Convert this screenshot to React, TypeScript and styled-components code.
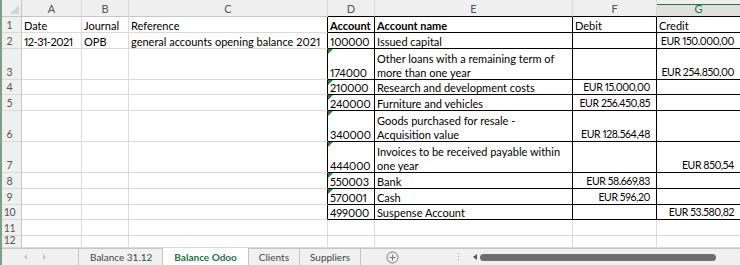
import React from "react";
import styled, { createGlobalStyle, css } from "styled-components";

const GlobalStyle = createGlobalStyle`
  html, body {
    margin: 0;
    padding: 0;
    background: #ffffff;
  }
  body {
    font-family: Lato, "Liberation Sans", sans-serif;
    overflow: hidden;
  }
`;

const GREEN = "#217346";
const GRID = "#dadada";
const HEAD_LINE = "#c6c6c6";

type Row = {
  h: number;
  a?: string;
  b?: string;
  c?: string;
  d?: string;
  e?: string[];
  f?: string;
  g?: string;
  flag?: boolean;
  head?: boolean;
};

const rows: Row[] = [
  { h: 16, a: "Date", b: "Journal", c: "Reference", d: "Account", e: ["Account name"], f: "Debit", g: "Credit", head: true },
  { h: 16, a: "12-31-2021", b: "OPB", c: "general accounts opening balance 2021", d: "100000", e: ["Issued capital"], g: "EUR 150.000,00" },
  { h: 31, d: "174000", e: ["Other loans with a remaining term of", "more than one year"], g: "EUR 254.850,00", flag: true },
  { h: 15, d: "210000", e: ["Research and development costs"], f: "EUR 15.000,00", flag: true },
  { h: 16, d: "240000", e: ["Furniture and vehicles"], f: "EUR 256.450,85", flag: true },
  { h: 31, d: "340000", e: ["Goods purchased for resale -", "Acquisition value"], f: "EUR 128.564,48", flag: true },
  { h: 31, d: "444000", e: ["Invoices to be received payable within", "one year"], g: "EUR 850,54", flag: true },
  { h: 16, d: "550003", e: ["Bank"], f: "EUR 58.669,83", flag: true },
  { h: 16, d: "570001", e: ["Cash"], f: "EUR 596,20", flag: true },
  { h: 15, d: "499000", e: ["Suspense Account"], g: "EUR 53.580,82" },
  { h: 16 },
  { h: 12 },
];

const columns = ["A", "B", "C", "D", "E", "F", "G"];
const TABLE_ROWS = 10;

// Lato's figures run wider than the sheet's font, so figures get narrowed a bit
type Fit = { size: number; spacing: number };
const fitFor = (text: string): Fit => {
  if (/[a-z]/.test(text)) return { size: 11, spacing: 0 };
  if (text.startsWith("EUR")) return { size: 10.5, spacing: -0.4 };
  if (text.includes("-")) return { size: 11, spacing: -0.5 };
  if (/^\d+$/.test(text)) return { size: 11, spacing: -0.2 };
  return { size: 11, spacing: 0 };
};

const Frame = styled.div`
  width: 740px;
  height: 265px;
  box-sizing: border-box;
  border-left: 2px solid #7f9d88;
  display: flex;
  flex-direction: column;
  overflow: hidden;
`;

const Sheet = styled.div<{ $rows: string }>`
  display: grid;
  grid-template-columns: 20px 60px 47px 199px 47px 198px 84px 84px;
  grid-template-rows: 17px ${(p) => p.$rows};
  font-size: 11px;
  color: #000;
  flex: none;
`;

const Corner = styled.div`
  position: relative;
  background: #efefef;
  border-right: 1px solid ${HEAD_LINE};
  border-bottom: 1px solid ${HEAD_LINE};
  &::after {
    content: "";
    position: absolute;
    right: 2px;
    bottom: 2px;
    border-left: 9px solid transparent;
    border-bottom: 9px solid #d4d4d4;
  }
`;

const ColHead = styled.div<{ $active?: boolean; $boxed?: boolean }>`
  display: flex;
  align-items: flex-end;
  justify-content: center;
  background: #efefef;
  color: #555;
  border-right: 1px solid ${GRID};
  border-bottom: 1px solid ${(p) => (p.$boxed ? "#000" : HEAD_LINE)};
  line-height: 14px;
  ${(p) =>
    p.$active &&
    css`
      background: #e0e0e0;
      color: ${GREEN};
      box-shadow: inset 0 4px 0 #efefef, inset 0 5px 0 ${GREEN};
    `}
`;

const RowHead = styled.div`
  display: flex;
  align-items: flex-end;
  justify-content: center;
  padding-right: 4px;
  background: #efefef;
  color: #555;
  font-size: 10.5px;
  letter-spacing: -0.3px;
  border-right: 1px solid ${HEAD_LINE};
  border-bottom: 1px solid ${GRID};
  line-height: 14px;
  overflow: hidden;
`;

const Cell = styled.div<{ $boxed?: boolean; $edge?: boolean; $num?: boolean; $bold?: boolean; $flag?: boolean }>`
  position: relative;
  display: flex;
  flex-direction: column;
  justify-content: flex-end;
  align-items: ${(p) => (p.$num ? "flex-end" : "flex-start")};
  padding: 0 ${(p) => (p.$num ? "6px" : "2px")} 0 2px;
  border-right: 1px solid ${(p) => (p.$boxed || p.$edge ? "#000" : GRID)};
  border-bottom: 1px solid ${(p) => (p.$boxed ? "#000" : GRID)};
  font-weight: ${(p) => (p.$bold ? 700 : 400)};
  white-space: nowrap;
  ${(p) =>
    p.$flag &&
    css`
      &::before {
        content: "";
        position: absolute;
        top: 0;
        left: 0;
        border-top: 5px solid #1d8a2e;
        border-right: 5px solid transparent;
      }
    `}
`;

const Line = styled.span<{ $fit: Fit }>`
  display: block;
  line-height: 15px;
  margin-bottom: -1px;
  font-size: ${(p) => p.$fit.size}px;
  letter-spacing: ${(p) => p.$fit.spacing}px;
  font-variant-numeric: proportional-nums;
`;

const TabBar = styled.div`
  display: flex;
  height: 17px;
  flex: none;
  background: #f0f0f0;
  box-shadow: inset 0 1px 0 ${HEAD_LINE};
  font-size: 10px;
  color: #444;
`;

const NavArea = styled.div`
  width: 77px;
  display: flex;
  align-items: center;
  gap: 16px;
  padding-left: 22px;
  box-sizing: border-box;
  border-right: 1px solid ${HEAD_LINE};
  margin-right: 1px;
`;

const NavArrow = styled.span<{ $dir: "left" | "right" }>`
  width: 0;
  height: 0;
  border-top: 3px solid transparent;
  border-bottom: 3px solid transparent;
  ${(p) =>
    p.$dir === "left"
      ? css`border-right: 3px solid #c4c4c4;`
      : css`border-left: 3px solid #c4c4c4;`}
`;

const Tab = styled.div<{ $active?: boolean }>`
  display: flex;
  align-items: center;
  padding: 1px 10px 0;
  border-right: 1px solid ${HEAD_LINE};
  white-space: nowrap;
  ${(p) =>
    p.$active &&
    css`
      background: #ffffff;
      color: ${GREEN};
      font-weight: 700;
      padding: 1px 11px 0;
    `}
`;

const AddArea = styled.div`
  width: 62px;
  display: flex;
  align-items: center;
  justify-content: center;
  padding-top: 1px;
`;

const Splitter = styled.div`
  width: 4px;
  display: flex;
  flex-direction: column;
  justify-content: center;
  align-items: center;
  gap: 2px;
  margin-left: 33px;
  span {
    width: 1px;
    height: 1px;
    background: #a0a0a0;
  }
`;

const ScrollArea = styled.div`
  flex: 1;
  display: flex;
  align-items: center;
  padding: 1px 0 0 13px;
  gap: 3px;
`;

const ScrollArrow = styled.span`
  width: 0;
  height: 0;
  border-top: 3px solid transparent;
  border-bottom: 3px solid transparent;
  border-right: 4px solid #555;
`;

const Thumb = styled.div`
  width: 236px;
  height: 7px;
  border-radius: 4px;
  background: #6e6e6e;
`;

const PlusIcon = () => (
  <svg width="13" height="13" viewBox="0 0 13 13" fill="none" stroke="#7a7a7a" strokeWidth="1">
    <circle cx="6.5" cy="6.5" r="5.5" />
    <path d="M6.5 3.5v6M3.5 6.5h6" />
  </svg>
);

export default function App() {
  const keys: (keyof Row)[] = ["a", "b", "c", "d", "e", "f", "g"];
  return (
    <>
      <GlobalStyle />
      <Frame>
        <Sheet $rows={rows.map((r) => `${r.h}px`).join(" ")}>
          <Corner />
          {columns.map((c, i) => (
            <ColHead key={c} $active={c === "G"} $boxed={i >= 3}>
              {c}
            </ColHead>
          ))}
          {rows.map((r, ri) => {
            const inTable = ri < TABLE_ROWS;
            return (
              <React.Fragment key={ri}>
                <RowHead>{ri + 1}</RowHead>
                {keys.map((k, ci) => {
                  const v = r[k];
                  const lines = Array.isArray(v) ? v : v ? [String(v)] : [];
                  const num = !r.head && (k === "f" || k === "g");
                  return (
                    <Cell
                      key={k}
                      $boxed={inTable && ci >= 3}
                      $edge={inTable && ci === 2}
                      $num={num}
                      $bold={r.head && (k === "d" || k === "e")}
                      $flag={r.flag && k === "d"}
                    >
                      {lines.map((l) => (
                        <Line key={l} $fit={fitFor(l)}>
                          {l}
                        </Line>
                      ))}
                    </Cell>
                  );
                })}
              </React.Fragment>
            );
          })}
        </Sheet>
        <TabBar>
          <NavArea>
            <NavArrow $dir="left" />
            <NavArrow $dir="right" />
          </NavArea>
          <Tab>Balance 31.12</Tab>
          <Tab $active>Balance Odoo</Tab>
          <Tab>Clients</Tab>
          <Tab>Suppliers</Tab>
          <AddArea>
            <PlusIcon />
          </AddArea>
          <Splitter>
            <span />
            <span />
            <span />
          </Splitter>
          <ScrollArea>
            <ScrollArrow />
            <Thumb />
          </ScrollArea>
        </TabBar>
      </Frame>
    </>
  );
}
